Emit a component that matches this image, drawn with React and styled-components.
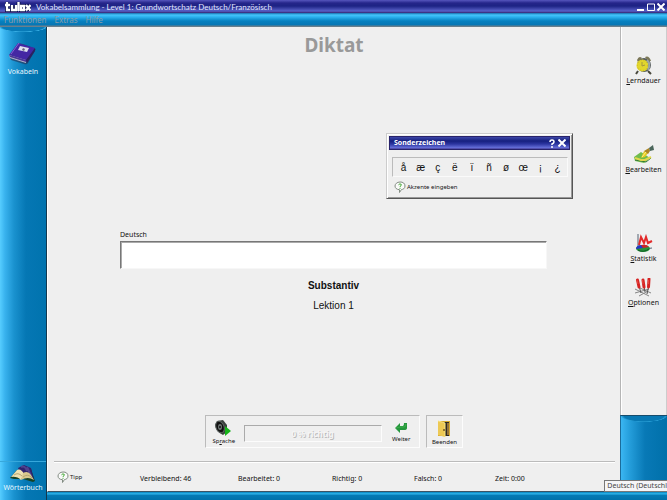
import React from "react";
import styled, { createGlobalStyle } from "styled-components";

const Global = createGlobalStyle`
  * { box-sizing: border-box; }
  body { margin: 0; background: #efefef; font-family: "Noto Sans", "Open Sans", sans-serif; font-size: 7px; line-height: 10px; color: #111; }
  button, input { font: inherit; color: inherit; margin: 0; }
  u { text-underline-offset: 1px; text-decoration-thickness: 1px; }
`;

const Page = styled.div`
  position: relative;
  min-height: 100vh;
  display: flex;
  flex-direction: column;
  overflow: hidden;
`;

const TitleBar = styled.header`
  height: 13px;
  display: flex;
  align-items: center;
  gap: 5px;
  padding: 0 1px 0 5px;
  background: linear-gradient(#5656bd 0, #25258a 3px, #1d2384 6px, #5960c8 11px, #34246e 13px);
  color: #e2e6ff;
`;

const WindowTitle = styled.h1`
  flex: 1;
  margin: 0;
  font: 400 8px/12px Lato, sans-serif;
  white-space: nowrap;
`;

const WindowButton = styled.button`
  width: 10px;
  height: 10px;
  padding: 0;
  border: 0;
  background: none;
  display: grid;
  place-items: center;
`;

const WindowButtons = styled.div`
  display: flex;
`;

const MenuBar = styled.nav`
  height: 14px;
  display: flex;
  align-items: center;
  gap: 8px;
  padding: 0 4px;
  background: linear-gradient(#176fae 0, #45c5fb 2px, #2cb1ee 4px, #0680c0 8px, #0676b4 12px, #697f8c 13px);
`;

const MenuItem = styled.button`
  padding: 0;
  border: 0;
  background: none;
  font-size: 8px;
  line-height: 12px;
  color: #8b9ba6;
`;

const Workspace = styled.div`
  flex: 1;
  display: grid;
  grid-template-columns: 47px minmax(0, 1fr) 47px;
  grid-template-rows: 1fr 8px;
`;

const blueColumn = `linear-gradient(90deg, #56cdff 0, #38b2ee 5px, #1a92cf 14px, #0577b4 26px, #0073ae 100%)`;

const SideBar = styled.aside`
  grid-row: 1 / 3;
  display: flex;
  flex-direction: column;
  justify-content: space-between;
  background: radial-gradient(ellipse 24px 5px at 50% 0, #087bb8 85%, #38aee4 95%, transparent 100%), ${blueColumn};
  border-right: 1px solid #12384f;
`;

const ToolButton = styled.button`
  width: 100%;
  padding: 0;
  border: 0;
  background: none;
  display: flex;
  flex-direction: column;
  align-items: center;
  gap: ${(p) => p.$gap ?? 1}px;
  color: ${(p) => (p.$light ? "#e9f8ff" : "#111")};
  white-space: nowrap;
  font-size: ${(p) => p.$size ?? 7}px;
  line-height: 9px;
`;

const SideTop = styled.div`
  padding-top: 15px;
`;

const SideBottom = styled.div`
  padding: 2px 0 8px;
  border-top: 1px solid #37a8dc;
`;

const Main = styled.main`
  display: flex;
  flex-direction: column;
  border-left: 1px solid #fff;
  border-bottom: 1px solid #3c5464;
  background: #efefef;
`;

const Heading = styled.h2`
  margin: 7px 0 0;
  text-align: center;
  font-size: 19px;
  line-height: 22px;
  color: #999;
`;

const Exercise = styled.section`
  flex: 1;
  padding: 174px 73px 0 72px;
  display: flex;
  flex-direction: column;
`;

const FieldLabel = styled.label`
  line-height: 10px;
  padding-bottom: 1px;
`;

const Answer = styled.input`
  width: 100%;
  height: 28px;
  padding: 0 6px;
  border: 1px solid;
  border-color: #777 #f7f7f7 #f7f7f7 #777;
  box-shadow: inset 1px 1px #aaa;
  background: #fff;
  font-size: 12px;
`;

const Info = styled.p`
  margin: ${(p) => p.$top}px 0 0;
  text-align: center;
  font: ${(p) => (p.$bold ? 700 : 400)} 10px/14px "Liberation Sans", sans-serif;
`;

const Controls = styled.div`
  display: flex;
  justify-content: center;
  gap: 6px;
  margin-bottom: 13px;
`;

const Sunken = styled.div`
  display: flex;
  align-items: center;
  gap: 2px;
  width: ${(p) => p.$width}px;
  height: 33px;
  padding-top: 3px;
  border: 1px solid;
  border-color: #bbb #fcfcfc #fcfcfc #bbb;
`;

const Progress = styled.div`
  flex: none;
  width: 138px;
  height: 17px;
  border: 1px solid;
  border-color: #aaa #fcfcfc #fcfcfc #aaa;
  text-align: center;
  font-size: 8px;
  line-height: 16px;
  font-weight: 700;
  color: #f5f5f5;
  text-shadow: 1px 1px #bbb;
`;

const StatusBar = styled.footer`
  height: 30px;
  margin: 0 5px 0 6px;
  border-top: 1px solid #bbb;
  box-shadow: inset 0 1px #fff;
  display: grid;
  grid-template-columns: 83px 98px 94px 82px 81px 1fr;
  align-items: center;
  white-space: nowrap;
  padding-left: 3px;
`;

const Stat = styled.span`
  padding-top: 5px;
`;

const HintButton = styled.button`
  padding: 0;
  border: 0;
  background: none;
  display: flex;
  align-items: center;
  gap: 1px;
  font-size: 6px;
  line-height: 12px;
  white-space: nowrap;
`;

const RightColumn = styled.aside`
  display: flex;
  flex-direction: column;
`;

const Tools = styled.div`
  flex: 1;
  border-left: 1px solid #b5b5b5;
  border-right: 1px solid #ccc;
  box-shadow: inset 1px 0 #fff;
  padding-top: 28px;
  display: grid;
  grid-template-rows: 90px 89px 44px 32px;
  align-content: start;
  align-items: start;
`;

const BlueCorner = styled.div`
  height: 77px;
  border-top: 1px solid #164c6c;
  border-left: 1px solid #1b6c9b;
  background: radial-gradient(ellipse 23px 6px at 50% 0, #0878b3 85%, #259bd3 95%, transparent 100%), linear-gradient(90deg, #3ab6f2 0, #249dda 9px, #0879b6 24px, #0070aa 100%);
`;

const BottomBar = styled.div`
  grid-column: 2 / 4;
  background: linear-gradient(#0783bd 0, #32b9ef 2px, #057bb5 3px, #0072ab 100%);
`;

const Tooltip = styled.div`
  position: absolute;
  right: 0;
  bottom: 8px;
  padding: 0 0 0 2px;
  white-space: nowrap;
  border: 1px solid #777;
  border-right: 0;
  background: #f5f5f7;
  color: #444;
  line-height: 10px;
`;

const Dialog = styled.section`
  position: absolute;
  top: 133px;
  right: 94px;
  width: 187px;
  height: 66px;
  padding: 2px;
  border: 1px solid;
  border-color: #ccc #555 #555 #ccc;
  box-shadow: inset 1px 1px #fff, inset -1px -1px #999;
  background: #efefef;
`;

const DialogTitle = styled.header`
  height: 14px;
  display: flex;
  align-items: center;
  padding: 0 2px 0 4px;
  border: 1px solid #28236b;
  background: linear-gradient(#3d47a8 0, #16207f 4px, #2c35a0 7px, #6973dc 11px, #3b2c80 12px);
  color: #fff;
`;

const DialogName = styled.h3`
  flex: 1;
  margin: 0;
  font-size: 7px;
  line-height: 12px;
`;

const Characters = styled.div`
  height: 20px;
  margin: 7px 2px 4px 3px;
  border: 1px solid;
  border-color: #bbb #fafafa #fafafa #bbb;
  display: grid;
  grid-template-columns: repeat(10, 1fr);
  padding: 0 1px 0 2px;
`;

const Character = styled.button`
  padding: 0;
  border: 0;
  background: none;
  text-align: center;
  font: 10px/20px "Liberation Sans", sans-serif;
`;

const DialogHint = styled.div`
  padding-left: 5px;
`;

const Logo = () => (
  <svg width="26" height="11" viewBox="0 0 26 11" fill="none" role="img" aria-label="tulox">
    <path d="M2 1V9H5M0 4H5M7 4V9H11V4M13.500 1V10M16 5H19V9H16Z M21 4L25.500 9.500M25.500 4L21 9.500" stroke="#0d114f" strokeWidth="4" />
    <path d="M2 1V9H5M0 4H5M7 4V9H11V4M13.500 1V10M16 5H19V9H16Z M21 4L25.500 9.500M25.500 4L21 9.500" stroke="#fff" strokeWidth="2.300" />
  </svg>
);

const Hint = () => (
  <svg width="12" height="12" viewBox="0 0 12 12" fill="none">
    <path d="M6 1C9 .8 11 2.500 11 5S9 8.500 7.500 8.500L5.500 11.500V8.700C2.500 8.500 1 7 1 5S3 1 6 1Z" fill="#fafafa" stroke="#828c82" />
    <path d="M4.500 3.800Q6 2 7.300 3.500Q7.600 4.500 6 5.500V6.200M6 7.200V8" stroke="#36a626" />
  </svg>
);

const Book = () => (
  <svg width="30" height="24" viewBox="0 0 30 24">
    <path d="M2 16L10 2Q12 .8 15 2L28 7L20 21Q19 23 16 22L3 18Z" fill="#26365a" opacity=".65" />
    <path d="M1 13L10 1L27 6L18 20Z" fill="#4427a3" />
    <path d="M1 13L18 18V21L2 16Z" fill="#b8b5cd" />
    <path d="M1 13L18 18V20L2 15Z" fill="#4a3796" />
    <path d="M18 18L27 6V9L19 21Z" fill="#2c2062" />
    <path d="M3 12L11 1" stroke="#8560d4" />
    <path d="M12 4L21 6L19 10L10 8Z" fill="#dedff0" />
    <path d="M15 6L17 7L16 9L14 8Z" fill="#667" />
  </svg>
);

const OpenBook = () => (
  <svg width="28" height="19" viewBox="0 0 28 19">
    <path d="M1 14L5 15L14 15L24 18L26 17L22 5L16 8L8 6Z" fill="#174226" />
    <path d="M9 4L15 1L22 4L25 16L20 10L11 9Z" fill="#30236e" />
    <path d="M12 3Q16 1 18 7M18 3L22 12" fill="none" stroke="#50438e" strokeWidth="2" />
    <path d="M2 13L8 6Q12 4 15 10L12 16Q8 12 2 13Z" fill="#eee1b2" />
    <path d="M12 16L14 9Q19 6 22 11L25 16Q19 12 12 16Z" fill="#d8c88e" />
    <path d="M5 11Q9 8 13 12M14 13Q19 9 23 14" fill="none" stroke="#b6a672" />
  </svg>
);

const Clock = () => (
  <svg width="18" height="20" viewBox="0 0 18 20">
    <path d="M3 16L1 19M13 16L16 19" stroke="#49483c" strokeWidth="2" />
    <circle cx="9" cy="10" r="7" fill="#555b5c" />
    <path d="M2 5Q4 0 7 3L3 7ZM10 2Q14 0 16 6L13 6Z" fill="#7b7756" />
    <circle cx="7.500" cy="10.500" r="6" fill="#e2d62c" />
    <circle cx="7.500" cy="10.500" r="5" fill="none" stroke="#c9b82d" strokeDasharray="1 2" />
    <path d="M7 7V11L10 10" fill="none" stroke="#a49842" />
    <path d="M12 5Q16 9 13 15" fill="none" stroke="#9ba6a6" strokeWidth="2" />
  </svg>
);

const Edit = () => (
  <svg width="22" height="19" viewBox="0 0 22 19" fill="none">
    <path d="M1 12L8 7L17 13L11 18L2 16Z" fill="#70bc4c" />
    <path d="M2 15L8 16L13 17L18 13" stroke="#357938" />
    <path d="M2 13L8 15L12 15L18 12" stroke="#e1d64d" strokeWidth="2" />
    <path d="M8 13L11 6L15 8L12 12Z" fill="#e6c920" />
    <path d="M11 6L16 3L17 6L15 9Z" fill="#ac8525" />
    <path d="M16 3L20 0L21 5L17 6Z" fill="#4b665b" />
    <path d="M9 12L13 7" stroke="#fff28a" />
  </svg>
);

const Chart = () => (
  <svg width="19" height="19" viewBox="0 0 19 19" fill="none">
    <path d="M4 0V16L18 14" stroke="#546274" />
    <path d="M5 11L7 3L10 9L12 3L14 9L18 7" stroke="#e22929" strokeWidth="2" />
    <ellipse cx="9" cy="14.500" rx="7" ry="3.500" fill="#25943b" />
    <path d="M9 14L2 15Q2 11 8 11Z" fill="#2538c7" />
    <path d="M9 14L7 11Q13 10 15 13Z" fill="#c92528" />
    <path d="M4 16Q9 19 15 15" stroke="#135d25" />
  </svg>
);

const Options = () => (
  <svg width="19" height="20" viewBox="0 0 19 20" fill="none">
    <path d="M1 11L15 18M1 15L15 11M6 10L17 15M5 18L14 13" stroke="#858585" />
    <path d="M5 8L7 15M10 8L11 14M15 7L13 16" stroke="#555" />
    <path d="M3.500 2L5 9M9 2L10 9M15 1L14.500 9" stroke="#d52323" strokeWidth="3" strokeLinecap="round" />
    <path d="M3 2L4 6M8.500 2L9 6M14.500 2V6" stroke="#e64940" />
  </svg>
);

const Speaker = () => (
  <svg width="17" height="16" viewBox="0 0 17 16">
    <path d="M2 1L8 0L12 5V12L8 15Q1 12 0 5Z" fill="#3b423e" />
    <ellipse cx="5" cy="7" rx="4" ry="6" transform="rotate(-20 5 7)" fill="#111" stroke="#5d6562" />
    <ellipse cx="5" cy="7" rx="2" ry="3" fill="#6c7472" />
    <circle cx="5" cy="7" r="1" fill="#111" />
    <path d="M10 6L16 11L10 16Z" fill="#17b41b" />
  </svg>
);

const Return = () => (
  <svg width="14" height="11" viewBox="0 0 14 11">
    <path d="M1 6L6 1V4H9Q10 4 10 1H13V6Q13 8 10 8H6V11Z" fill="#24973c" />
    <path d="M2 6L6 5H10Q12 5 12 2" fill="none" stroke="#3fae4d" />
  </svg>
);

const Door = () => (
  <svg width="15" height="17" viewBox="0 0 15 17">
    <path d="M1 1H13V16H1Z" fill="#d7aa2e" />
    <path d="M5 2H12V16H5Z" fill="#2e2a24" />
    <path d="M1 1L8 3V17L1 15Z" fill="#edc955" />
    <path d="M1 1L8 3V17" fill="none" stroke="#fae584" />
    <path d="M10 3H12V15H10Z" fill="#94733a" />
    <circle cx="7" cy="10" r="1" fill="#715422" />
  </svg>
);

const Minimize = () => <svg width="8" height="8" viewBox="0 0 8 8"><path d="M0 7H7" stroke="#fff" strokeWidth="2" /></svg>;
const Maximize = () => <svg width="8" height="8" viewBox="0 0 8 8"><path d="M.5 7.500V1H7.500V7.500Z" fill="none" stroke="#fff" /></svg>;
const Close = () => <svg width="8" height="8" viewBox="0 0 8 8"><path d="M.5 .5L7.500 7.500M7.500 .5L.5 7.500" stroke="#fff" strokeWidth="2" /></svg>;
const Question = () => <svg width="8" height="9" viewBox="0 0 8 9"><path d="M2 3Q2 1 4 1T6 3Q6 4 4 5V6M4 7V9" fill="none" stroke="#fff" strokeWidth="1.500" /></svg>;

const letters = ["å", "æ", "ç", "ë", "ï", "ñ", "ø", "œ", "¡", "¿"];

export default function App() {
  return (
    <Page>
      <Global />
      <TitleBar>
        <Logo />
        <WindowTitle>Vokabelsammlung - Level 1: Grundwortschatz Deutsch/Französisch</WindowTitle>
        <WindowButtons>
          <WindowButton aria-label="Minimieren"><Minimize /></WindowButton>
          <WindowButton aria-label="Maximieren"><Maximize /></WindowButton>
          <WindowButton aria-label="Schließen"><Close /></WindowButton>
        </WindowButtons>
      </TitleBar>
      <MenuBar>
        <MenuItem>Funktionen</MenuItem>
        <MenuItem>Extras</MenuItem>
        <MenuItem>Hilfe</MenuItem>
      </MenuBar>
      <Workspace>
        <SideBar>
          <SideTop><ToolButton $light><Book /><span>Vokabeln</span></ToolButton></SideTop>
          <SideBottom><ToolButton $light $gap={0}><OpenBook /><span>Wörterbuch</span></ToolButton></SideBottom>
        </SideBar>
        <Main>
          <Heading>Diktat</Heading>
          <Exercise>
            <FieldLabel htmlFor="answer">Deutsch</FieldLabel>
            <Answer id="answer" type="text" />
            <Info $top={10} $bold>Substantiv</Info>
            <Info $top={6}>Lektion 1</Info>
          </Exercise>
          <Controls>
            <Sunken $width={215}>
              <ToolButton $size={6} $gap={1}><Speaker /><span>Sp<u>r</u>ache</span></ToolButton>
              <Progress>0 % richtig</Progress>
              <ToolButton $size={6} $gap={2}><Return /><span>Weiter</span></ToolButton>
            </Sunken>
            <Sunken $width={37}>
              <ToolButton $size={6} $gap={1}><Door /><span>Beenden</span></ToolButton>
            </Sunken>
          </Controls>
          <StatusBar>
            <HintButton><Hint /><span>Tipp</span></HintButton>
            <Stat>Verbleibend: 46</Stat>
            <Stat>Bearbeitet: 0</Stat>
            <Stat>Richtig: 0</Stat>
            <Stat>Falsch: 0</Stat>
            <Stat>Zeit: 0:00</Stat>
          </StatusBar>
        </Main>
        <RightColumn>
          <Tools>
            <ToolButton><Clock /><span><u>L</u>erndauer</span></ToolButton>
            <ToolButton><Edit /><span><u>B</u>earbeiten</span></ToolButton>
            <ToolButton><Chart /><span><u>S</u>tatistik</span></ToolButton>
            <ToolButton $gap={0}><Options /><span><u>O</u>ptionen</span></ToolButton>
          </Tools>
          <BlueCorner />
        </RightColumn>
        <BottomBar />
      </Workspace>
      <Dialog role="dialog" aria-labelledby="dialog-name">
        <DialogTitle>
          <DialogName id="dialog-name">Sonderzeichen</DialogName>
          <WindowButton aria-label="Hilfe"><Question /></WindowButton>
          <WindowButton aria-label="Schließen"><Close /></WindowButton>
        </DialogTitle>
        <Characters>
          {letters.map((c) => <Character key={c}>{c}</Character>)}
        </Characters>
        <DialogHint><HintButton><Hint /><span>Akzente eingeben</span></HintButton></DialogHint>
      </Dialog>
      <Tooltip role="tooltip">Deutsch (Deutschl</Tooltip>
    </Page>
  );
}
